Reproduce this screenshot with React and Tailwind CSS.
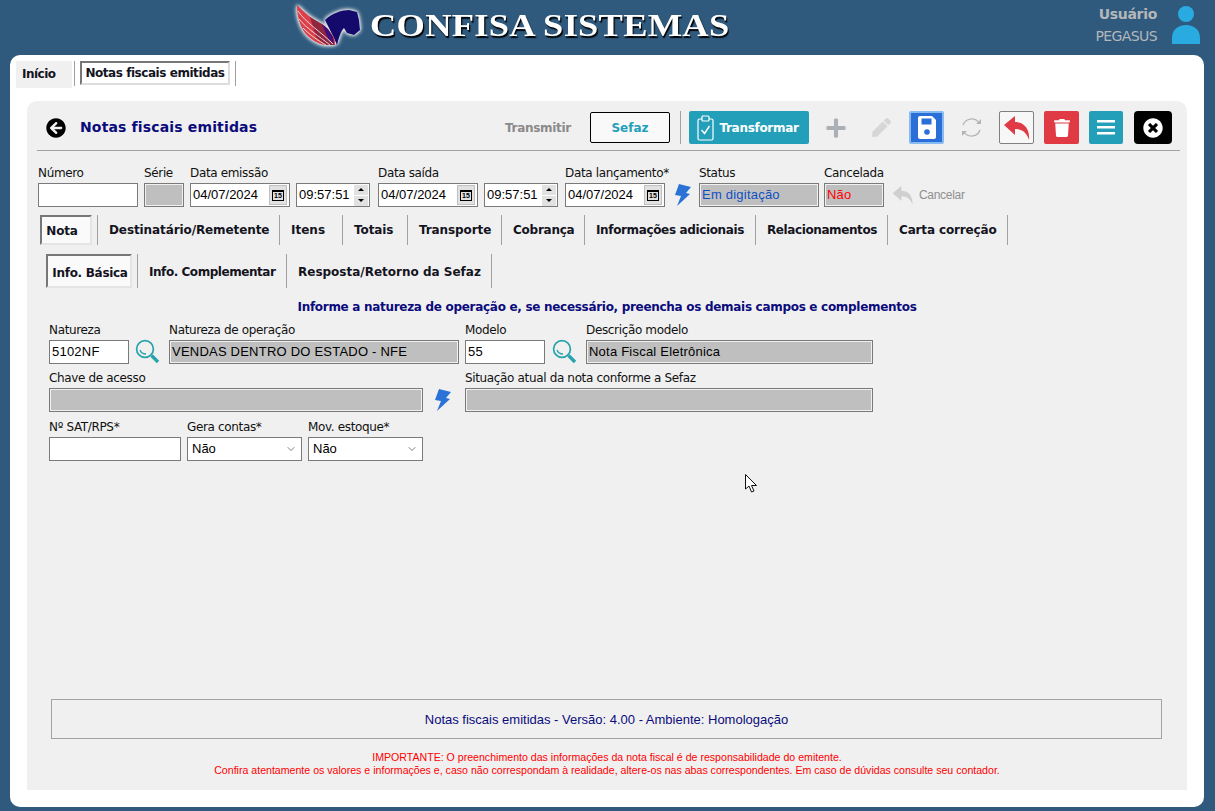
import { ChevronDown } from 'lucide-react';
import { FaArrowCircleLeft, FaPen, FaPlus, FaTimesCircle, FaTrash } from 'react-icons/fa';

const mainTabs = [
  { label: 'Destinatário/Remetente', w: 'w-[181px]', t: 'tracking-[-0.1px]' },
  { label: 'Itens', w: 'w-[62px]', t: '' },
  { label: 'Totais', w: 'w-[64px]', t: 'tracking-[-0.1px]' },
  { label: 'Transporte', w: 'w-[93px]', t: 'tracking-[-0.1px]' },
  { label: 'Cobrança', w: 'w-[82px]', t: 'tracking-[-0.25px]' },
  { label: 'Informações adicionais', w: 'w-[170px]', t: 'tracking-[-0.36px]' },
  { label: 'Relacionamentos', w: 'w-[131px]', t: 'tracking-[-0.4px]' },
  { label: 'Carta correção', w: 'w-[119px]', t: 'tracking-[-0.15px]' },
];

const Logo = () => (
  <svg width="72" height="52" viewBox="0 0 72 52" className="shrink-0 self-start [filter:drop-shadow(0_0_2px_#e8e8e8)_drop-shadow(0_0_1px_#ffffff)]">
    <path d="M33 20C40 13 50 10 57 10L65 12L67 20L68 30L62 35L55 33L52 28C49 31 47 37 45 45L41 36Z" fill="#130a6b" />
    <path d="M5 5C5 17 8 26 13 33C19 40 26 44 33 45H43C43 41 43 38 41 36C37 30 34 26 28 23C20 19 12 12 5 5Z" fill="#db3f49" />
    <path d="M18 17L30 24L41 37L42 45H33L24 37Z" fill="#7c1f3c" opacity="0.8" />
    <path d="M30 24L36 29L41 37L42 44L36 38Z" fill="#3a107e" />
    <path d="M6 11C14 23 28 31 41 44M7 19C15 29 27 36 38 45M11 28C19 36 27 41 34 45" fill="none" stroke="#f4e6e6" strokeWidth="0.9" />
  </svg>
);

const Header = () => (
  <div className="flex h-[55px] shrink-0 pl-[292px] pr-[15px]">
    <div className="flex h-[50px] items-center gap-[6px]">
      <Logo />
      <span className="origin-left whitespace-nowrap font-['Liberation_Serif',serif] text-[32px] font-bold leading-none tracking-[0.2px] text-white [text-shadow:1px_2px_1px_#000] [transform:scaleX(1.14)]">
        CONFISA SISTEMAS
      </span>
    </div>
    <div className="ml-auto flex">
      <div className="flex flex-col items-end pr-[15px] pt-[4px] font-['DejaVu_Sans',sans-serif] text-[#b4b7ba]">
        <span className="text-[14px] font-bold leading-[20px] tracking-[-0.3px]">Usuário</span>
        <span className="mt-[2px] text-[14px] leading-[20px] tracking-[-0.6px]">PEGASUS</span>
      </div>
      <svg width="28" height="40" viewBox="0 0 28 40" className="mt-[5px]">
        <circle cx="14" cy="9" r="8" fill="#29abe2" />
        <path d="M0 39V33C0 25 6 20 14 20C22 20 28 25 28 33V39Z" fill="#29abe2" />
      </svg>
    </div>
  </div>
);

const Separator = ({ className = '' }) => <div className={`w-px shrink-0 bg-[#a0a0a0] ${className}`} />;

const IconButton = ({ className = '', children }) => (
  <div className={`flex h-[33px] items-center justify-center rounded-[2px] ${className}`}>{children}</div>
);

const ReplyIcon = ({ className = '' }) => (
  <svg viewBox="0 0 26 24" className={className} fill="currentColor">
    <path d="M0 9L11 0V6C20 6 26 13 25 24C23 17 18 13 11 13V19Z" />
  </svg>
);

const Toolbar = () => (
  <div className="ml-[10px] mr-[7px] flex h-[50px] shrink-0 items-center border-b border-[#a3a3a3] pl-[9px] pt-[4px]">
    <FaArrowCircleLeft className="h-[20px] w-[20px] text-black" />
    <span className="ml-[14px] font-['DejaVu_Sans',sans-serif] text-[14px] font-bold tracking-[0.15px] text-[#0b0b7c]">Notas fiscais emitidas</span>
    <span className="ml-auto font-['DejaVu_Sans',sans-serif] text-[12px] font-bold tracking-[-0.3px] text-[#8a8a8a]">Transmitir</span>
    <div className="ml-[19px] flex h-[31px] w-[80px] items-center justify-center rounded-[2px] border border-black bg-[#f9f9f9] font-['DejaVu_Sans',sans-serif] text-[12px] font-bold text-[#239fba]">
      Sefaz
    </div>
    <Separator className="ml-[10px] h-[33px]" />
    <IconButton className="ml-[8px] w-[120px] gap-[5px] bg-[#239fba] pr-[2px] font-['DejaVu_Sans',sans-serif] text-[12px] font-bold tracking-[-0.3px] text-white">
      <svg width="17" height="26" viewBox="0 0 17 26" fill="none" stroke="#ffffff" strokeWidth="1.2">
        <rect x="1" y="4" width="15" height="21" rx="1.5" />
        <rect x="5" y="1" width="7" height="5" rx="1" fill="#239fba" />
        <path d="M4.500 15L7.500 18.500L12.500 11" strokeWidth="1.4" />
      </svg>
      Transformar
    </IconButton>
    <FaPlus className="ml-[16px] h-[22px] w-[22px] text-[#aab0b5]" />
    <FaPen className="ml-[25px] h-[19px] w-[19px] text-[#d6d6d6]" />
    <IconButton className="ml-[18px] w-[35px] border-2 border-[#86baf0] bg-[#2a6fd8]">
      <svg width="18" height="23" viewBox="0 0 18 23">
        <path d="M2 0H14L18 4V21A2 2 0 0 1 16 23H2A2 2 0 0 1 0 21V2A2 2 0 0 1 2 0Z" fill="#ffffff" />
        <rect x="3.500" y="2.500" width="10" height="6" fill="#2a6fd8" />
        <circle cx="9" cy="16" r="2.800" fill="#2a6fd8" />
      </svg>
    </IconButton>
    <svg width="23" height="23" viewBox="0 0 23 23" fill="none" stroke="#b4b4b4" strokeWidth="1.3" className="ml-[16px]">
      <path d="M3 9A9 9 0 0 1 19 7" />
      <path d="M20 14A9 9 0 0 1 4 16" />
      <path d="M16 8H21V3" fill="#b4b4b4" stroke="none" />
      <path d="M7 15H2V20" fill="#b4b4b4" stroke="none" />
    </svg>
    <IconButton className="ml-[16px] w-[35px] border border-[#808080] bg-[#f7f7f7]">
      <ReplyIcon className="h-[24px] w-[26px] text-[#e03a45]" />
    </IconButton>
    <IconButton className="ml-[10px] w-[35px] bg-[#e03a45]">
      <FaTrash className="h-[18px] w-[16px] text-white" />
    </IconButton>
    <IconButton className="ml-[10px] w-[34px] bg-[#239fba]">
      <svg width="18" height="15" viewBox="0 0 18 15" fill="#ffffff">
        <rect width="18" height="2.500" />
        <rect y="6" width="18" height="2.500" />
        <rect y="12" width="18" height="2.500" />
      </svg>
    </IconButton>
    <IconButton className="ml-[11px] mr-[8px] w-[38px] rounded-[4px] bg-black">
      <FaTimesCircle className="h-[20px] w-[20px] text-white" />
    </IconButton>
  </div>
);

const Label = ({ children }) => (
  <div className="h-[18px] whitespace-nowrap font-['DejaVu_Sans',sans-serif] text-[12px] leading-[16px] tracking-[-0.35px] text-[#111111]">{children}</div>
);

const TextBox = ({ value, disabled, tone = 'text-black', className = '' }) => (
  <div
    className={`flex h-[24px] items-center overflow-hidden whitespace-nowrap border border-[#7a7a7a] px-[2px] font-['Liberation_Sans',sans-serif] text-[13px] tracking-[0.22px] ${tone} ${
      disabled ? 'bg-[#bfbfbf] shadow-[inset_0_0_0_1px_#f0f0f0]' : 'bg-white'
    } ${className}`}
  >
    {value}
  </div>
);

const Field = ({ label, className = '', ...rest }) => (
  <div className={`shrink-0 ${className}`}>
    <Label>{label}</Label>
    <TextBox {...rest} />
  </div>
);

const DateField = ({ label, className = '' }) => (
  <div className={`w-[100px] shrink-0 ${className}`}>
    <Label>{label}</Label>
    <div className="flex h-[24px] items-center justify-between border border-[#7a7a7a] bg-white pl-[2px] pr-[2px] font-['Liberation_Sans',sans-serif] text-[13px] text-black">
      04/07/2024
      <div className="flex h-[20px] w-[18px] items-center justify-center border border-[#c0c0c0] bg-[#e1e1e1]">
        <div className="flex h-[11px] w-[12px] items-center justify-center border border-t-2 border-black font-['Liberation_Sans',sans-serif] text-[7px] font-bold leading-none">15</div>
      </div>
    </div>
  </div>
);

const TimeField = ({ className = '' }) => (
  <div className={`w-[74px] shrink-0 pt-[18px] ${className}`}>
    <div className="flex h-[24px] items-center justify-between border border-[#7a7a7a] bg-white pl-[2px] pr-px font-['Liberation_Sans',sans-serif] text-[13px] text-black">
      09:57:51
      <div className="flex w-[14px] flex-col gap-px">
        <div className="flex h-[10px] items-center justify-center bg-[#e1e1e1]">
          <div className="h-0 w-0 border-x-[3px] border-b-[3px] border-x-transparent border-b-black" />
        </div>
        <div className="flex h-[10px] items-center justify-center bg-[#e1e1e1]">
          <div className="h-0 w-0 border-x-[3px] border-t-[3px] border-x-transparent border-t-black" />
        </div>
      </div>
    </div>
  </div>
);

const Bolt = ({ className = '' }) => (
  <svg width="16" height="22" viewBox="0 0 16 22" className={`shrink-0 ${className}`}>
    <path d="M4 0L16 3L11 9L15 10L2 22L6 12L0 11Z" fill="#2a72d6" />
  </svg>
);

const Magnifier = ({ className = '' }) => (
  <svg width="25" height="25" viewBox="0 0 25 25" className={`shrink-0 ${className}`}>
    <circle cx="10" cy="10" r="8.400" fill="none" stroke="#28a3ad" strokeWidth="1.700" />
    <path d="M5 11C6 14 8 15 11 15" fill="none" stroke="#28a3ad" strokeWidth="1.300" />
    <path d="M16.500 16.500L23 23" stroke="#28a3ad" strokeWidth="3.400" />
  </svg>
);

const SelectField = ({ label, className = '' }) => (
  <div className={`shrink-0 ${className}`}>
    <Label>{label}</Label>
    <div className="flex h-[24px] items-center justify-between border border-[#7a7a7a] bg-white pl-[4px] pr-[4px] font-['Liberation_Sans',sans-serif] text-[13px] text-black">
      Não
      <ChevronDown className="h-[12px] w-[12px] text-[#555555]" strokeWidth={1.5} />
    </div>
  </div>
);

const tabText = "font-['DejaVu_Sans',sans-serif] text-[12px] font-bold whitespace-nowrap text-[#14141e]";
const activeTab = 'flex items-center justify-center bg-[#fafafa] border-2 border-[#e4e4e4] border-t-[#777777] border-l-[#777777]';

const FormHeader = () => (
  <div className="mt-[14px] flex shrink-0 pl-[11px]">
    <Field label="Número" className="w-[100px]" />
    <Field label="Série" disabled className="ml-[6px] w-[40px]" />
    <DateField label="Data emissão" className="ml-[6px]" />
    <TimeField className="ml-[6px]" />
    <DateField label="Data saída" className="ml-[8px]" />
    <TimeField className="ml-[6px]" />
    <DateField label="Data lançamento*" className="ml-[7px]" />
    <div className="ml-[10px] flex w-[24px] shrink-0 items-end pb-px">
      <Bolt />
    </div>
    <Field label="Status" value="Em digitação" disabled tone="text-[#0f4fc4]" className="w-[120px]" />
    <Field label="Cancelada" value="Não" disabled tone="text-[#ff0000]" className="ml-[5px] w-[60px]" />
    <div className="ml-[7px] flex items-center gap-[4px] pt-[18px]">
      <ReplyIcon className="h-[19px] w-[24px] text-[#cfcfcf]" />
      <span className="font-['Liberation_Sans',sans-serif] text-[12px] tracking-[-0.3px] text-[#8f8f8f]">Cancelar</span>
    </div>
  </div>
);

const MainTabs = () => (
  <div className="mt-[8px] flex h-[30px] shrink-0 pl-[13px]">
    <div className={`h-[30px] w-[52px] pt-[2px] pr-[8px] tracking-[-0.2px] ${activeTab} ${tabText}`}>Nota</div>
    <Separator className="ml-[5px]" />
    {mainTabs.map((item) => (
      <div key={item.label} className="flex">
        <div className={`flex items-center pl-[11px] ${item.w} ${item.t} ${tabText}`}>{item.label}</div>
        <Separator />
      </div>
    ))}
  </div>
);

const SubTabs = () => (
  <div className="mt-[9px] flex h-[34px] shrink-0 pl-[19px]">
    <div className={`h-[34px] w-[86px] pt-[3px] pl-[2px] tracking-[-0.3px] ${activeTab} ${tabText}`}>Info. Básica</div>
    <Separator className="ml-[5px]" />
    <div className={`flex w-[148px] items-center pl-[11px] pt-[1px] tracking-[-0.45px] ${tabText}`}>Info. Complementar</div>
    <Separator />
    <div className={`flex w-[204px] items-center pl-[11px] pt-[1px] ${tabText}`}>Resposta/Retorno da Sefaz</div>
    <Separator />
  </div>
);

const BasicInfo = () => (
  <div className="flex shrink-0 flex-col pl-[22px]">
    <div className="-ml-[22px] mt-[11px] h-[16px] w-[1160px] text-center font-['DejaVu_Sans',sans-serif] text-[12px] font-bold leading-[16px] tracking-[-0.3px] text-[#0b0b7c]">
      Informe a natureza de operação e, se necessário, preencha os demais campos e complementos
    </div>
    <div className="mt-[7px] flex">
      <Field label="Natureza" value="5102NF" className="w-[80px]" />
      <div className="flex w-[40px] items-end"><Magnifier className="ml-[6px]" /></div>
      <Field label="Natureza de operação" value="VENDAS DENTRO DO ESTADO - NFE" disabled className="w-[290px]" />
      <Field label="Modelo" value="55" className="ml-[6px] w-[80px]" />
      <div className="flex w-[41px] items-end"><Magnifier className="ml-[7px]" /></div>
      <Field label="Descrição modelo" value="Nota Fiscal Eletrônica" disabled className="w-[287px]" />
    </div>
    <div className="mt-[6px] flex">
      <Field label="Chave de acesso" disabled className="w-[374px]" />
      <div className="flex w-[42px] items-end pb-px"><Bolt className="ml-[12px]" /></div>
      <Field label="Situação atual da nota conforme a Sefaz" disabled className="w-[408px]" />
    </div>
    <div className="mt-[7px] flex">
      <Field label="Nº SAT/RPS*" className="w-[132px]" />
      <SelectField label="Gera contas*" className="ml-[6px] w-[115px]" />
      <SelectField label="Mov. estoque*" className="ml-[6px] w-[115px]" />
    </div>
  </div>
);

const Footer = () => (
  <div className="mt-auto flex shrink-0 flex-col pb-[13px]">
    <div className="ml-[24px] flex h-[40px] w-[1111px] items-center justify-center border border-[#a3a3a3] pt-[1px] font-['Liberation_Sans',sans-serif] text-[13px] text-[#0b0b7c]">
      Notas fiscais emitidas - Versão: 4.00 - Ambiente: Homologação
    </div>
    <div className="mt-[12px] text-center font-['Liberation_Sans',sans-serif] text-[10.6px] leading-[13px] text-[#ff0000]">
      <div>IMPORTANTE: O preenchimento das informações da nota fiscal é de responsabilidade do emitente.</div>
      <div>Confira atentamente os valores e informações e, caso não correspondam à realidade, altere-os nas abas correspondentes. Em caso de dúvidas consulte seu contador.</div>
    </div>
  </div>
);

const App = () => (
  <div className="relative flex h-[811px] w-[1215px] flex-col overflow-hidden bg-[#2f5a7e]">
    <Header />
    <div className="ml-[10px] mr-[11px] flex h-[752px] flex-col rounded-[10px] bg-white px-[17px]">
      <div className="-ml-[11px] flex h-[46px] shrink-0 pt-[6px]">
        <div className="flex h-[27px] w-[56px] items-center bg-[#f0f0f0] pb-[2px] pl-[6px] font-['DejaVu_Sans',sans-serif] text-[12px] font-bold tracking-[-0.5px] text-[#14141e]">Início</div>
        <Separator className="ml-[2px] h-[25px]" />
        <div className="ml-[5px] flex h-[24px] w-[150px] items-center justify-center whitespace-nowrap border-2 border-[#dddddd] border-l-[#777777] border-t-[#777777] font-['DejaVu_Sans',sans-serif] text-[12px] font-bold tracking-[-0.45px] text-[#14141e]">Notas fiscais emitidas</div>
        <Separator className="ml-[5px] h-[25px]" />
      </div>
      <div className="flex h-[689px] flex-col rounded-t-[10px] bg-[#f0f0f0]">
        <Toolbar />
        <FormHeader />
        <MainTabs />
        <SubTabs />
        <BasicInfo />
        <Footer />
      </div>
    </div>
    {/* ponteiro do mouse */}
    <svg width="13" height="19" viewBox="0 0 13 19" className="absolute left-[745px] top-[474px]">
      <path d="M0.500 0.500V15L4 12L6.500 18L9 17L6.500 11.500L11.500 11.500Z" fill="#ffffff" stroke="#111111" strokeWidth="1" />
    </svg>
  </div>
);

export default App;
